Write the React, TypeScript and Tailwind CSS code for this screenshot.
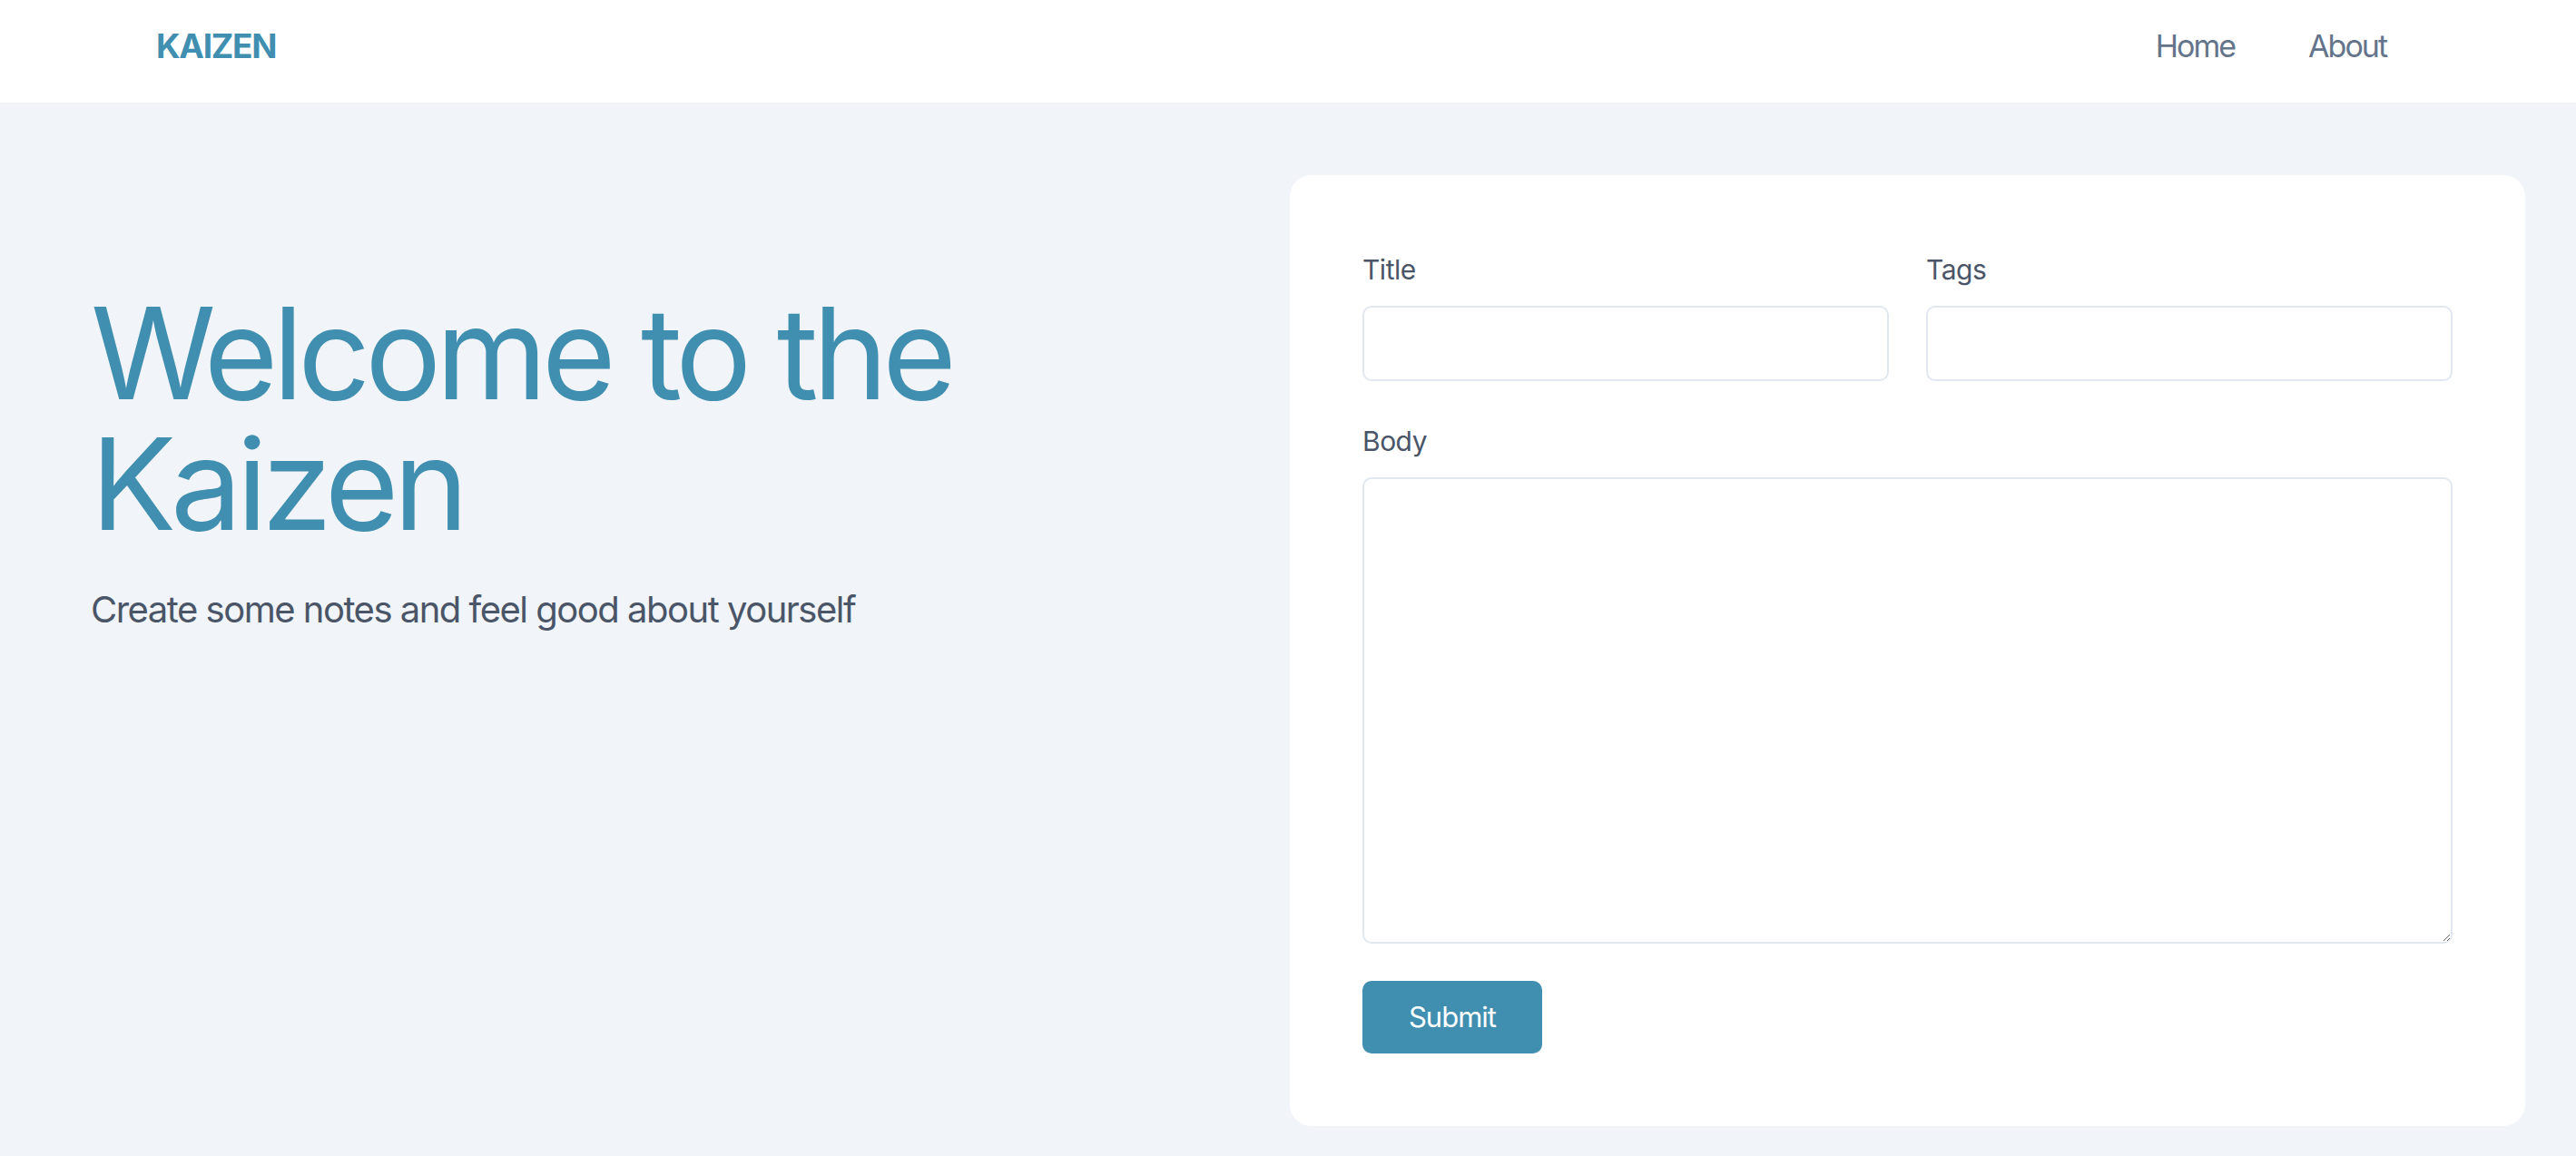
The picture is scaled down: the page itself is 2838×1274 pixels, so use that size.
export default function App() {
  return (
    <div
      className="min-h-screen bg-[#f1f5f9]"
      style={{ fontFamily: "Inter, 'Noto Sans', sans-serif" }}
    >
      {/* Top bar */}
      <header className="h-[113px] bg-white flex items-center justify-between pl-[172px] pr-[209px] pb-3">
        <a href="#" className="text-[37px] font-bold tracking-[-1.3px] text-[#418fb0]">
          KAIZEN
        </a>
        <nav className="flex items-center gap-[81px] text-[34px] tracking-[-2px] text-[#64748b]">
          <a href="#">Home</a>
          <a href="#">About</a>
        </nav>
      </header>

      <main className="flex pl-[100px] pr-[56px] pt-[80px] pb-10">
        {/* Intro */}
        <section className="flex-1 pt-[124px]">
          <h1 className="text-[140px] tracking-[-6px] text-[#418fb0]">
            <span className="block leading-[144px]">Welcome to the</span>
            <span className="block leading-[144px]">Kaizen</span>
          </h1>
          <p className="mt-[39px] text-[40px] leading-[56px] tracking-[-1.5px] text-[#4a5568]">
            Create some notes and feel good about yourself
          </p>
        </section>

        {/* Note form */}
        <form className="w-[1361px] bg-white rounded-[24px] p-[80px]">
          <div className="grid grid-cols-2 gap-x-[41px]">
            <div>
              <label className="block mb-4 text-[30px] leading-[48px] tracking-[-0.5px] text-[#4a5568]">
                Title
              </label>
              <input
                type="text"
                className="block w-full h-[83px] border-2 border-[#e2e8f0] rounded-[10px] bg-white outline-none"
              />
            </div>
            <div>
              <label className="block mb-4 text-[30px] leading-[48px] tracking-[-0.5px] text-[#4a5568]">
                Tags
              </label>
              <input
                type="text"
                className="block w-full h-[83px] border-2 border-[#e2e8f0] rounded-[10px] bg-white outline-none"
              />
            </div>
          </div>

          <div className="mt-[42px]">
            <label className="block mb-4 text-[30px] leading-[48px] tracking-[-0.5px] text-[#4a5568]">
              Body
            </label>
            <textarea className="block w-full h-[514px] border-2 border-[#e2e8f0] rounded-[10px] bg-white outline-none" />
          </div>

          <button
            type="button"
            className="mt-[41px] h-[80px] w-[198px] rounded-[10px] bg-[#418fb0] text-white text-[31px] tracking-[-1px]"
          >
            Submit
          </button>
        </form>
      </main>
    </div>
  );
}
